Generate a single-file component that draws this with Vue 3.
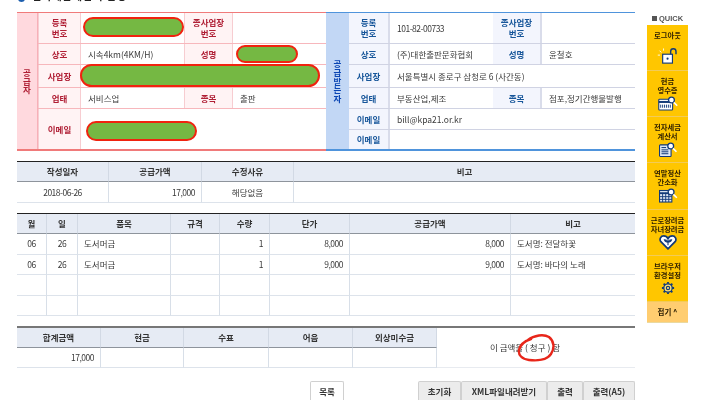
<script setup>
const red = [
  { h: 'h31', cells: [['th', '등록\n번호'], ['td', ''], ['th', '종사업장\n번호'], ['td', '']] },
  { h: 'h21', cells: [['th', '상호'], ['td', '시속4km(4KM/H)'], ['th', '성명'], ['td', '']] },
  { h: 'h23', cells: [['th', '사업장'], ['td wide', '']] },
  { h: 'h21', cells: [['th', '업태'], ['td', '서비스업'], ['th', '종목'], ['td', '출판']] },
  { h: 'h40', cells: [['th', '이메일'], ['td wide', '']] }
]
const blue = [
  { h: 'h31', cells: [['th', '등록\n번호'], ['td num', '101-82-00733'], ['th', '종사업장\n번호'], ['td', '']] },
  { h: 'h21', cells: [['th', '상호'], ['td', '(주)대한출판문화협회'], ['th', '성명'], ['td', '윤철호']] },
  { h: 'h23', cells: [['th', '사업장'], ['td wide', '서울특별시 종로구 삼청로 6 (사간동)']] },
  { h: 'h21', cells: [['th', '업태'], ['td', '부동산업,제조'], ['th', '종목'], ['td', '점포,정기간행물발행']] },
  { h: 'h21', cells: [['th', '이메일'], ['td wide', 'bill@kpa21.or.kr']] },
  { h: 'h19', cells: [['th', '이메일'], ['td wide', '']] }
]
const itemHead = ['월', '일', '품목', '규격', '수량', '단가', '공급가액', '비고']
const items = [
  ['06', '26', '도서머금', '', '1', '8,000', '8,000', '도서명: 전달하꽃'],
  ['06', '26', '도서머금', '', '1', '9,000', '9,000', '도서명: 바다의 노래'],
  ['', '', '', '', '', '', '', ''],
  ['', '', '', '', '', '', '', '']
]
const quick = [
  { label: ['로그아웃'], icon: 'lock' },
  { label: ['현금', '영수증'], icon: 'card' },
  { label: ['전자세금', '계산서'], icon: 'doc' },
  { label: ['연말정산', '간소화'], icon: 'grid' },
  { label: ['근로장려금', '자녀장려금'], icon: 'heart' },
  { label: ['브라우저', '환경설정'], icon: 'gear' }
]
</script>

<template>
  <div class="page">
    <main class="main">
      <div class="title"><i class="dot"></i><span>전자세금계산서 발행</span></div>

      <section class="party">
        <div class="side side--red">
          <b class="side__t"><span>공</span><span>급</span><span>자</span></b>
          <div class="rows">
            <div v-for="(r, i) in red" :key="i" class="row row--red" :class="r.h">
              <div v-for="(c, j) in r.cells" :key="j" :class="c[0]">{{ c[1] }}</div>
            </div>
          </div>
        </div>
        <div class="side side--blue">
          <b class="side__t"><span>공</span><span>급</span><span>받</span><span>는</span><span>자</span></b>
          <div class="rows">
            <div v-for="(r, i) in blue" :key="i" class="row row--blue" :class="r.h">
              <div v-for="(c, j) in r.cells" :key="j" :class="c[0]">{{ c[1] }}</div>
            </div>
          </div>
        </div>
        <i class="mask mask--1"></i>
        <i class="mask mask--2"></i>
        <i class="mask mask--3"></i>
        <i class="mask mask--4"></i>
      </section>

      <section class="tb tb--sum">
        <div class="hd">작성일자</div><div class="hd">공급가액</div><div class="hd">수정사유</div><div class="hd">비고</div>
        <div class="cell c num">2018-06-26</div><div class="cell r num">17,000</div><div class="cell c">해당없음</div><div class="cell"></div>
      </section>

      <section class="tb tb--items">
        <div v-for="h in itemHead" :key="h" class="hd">{{ h }}</div>
        <template v-for="(row, i) in items" :key="i">
          <div class="cell c num">{{ row[0] }}</div>
          <div class="cell c num">{{ row[1] }}</div>
          <div class="cell l">{{ row[2] }}</div>
          <div class="cell"></div>
          <div class="cell r num">{{ row[4] }}</div>
          <div class="cell r num">{{ row[5] }}</div>
          <div class="cell r num">{{ row[6] }}</div>
          <div class="cell l">{{ row[7] }}</div>
        </template>
      </section>

      <section class="total">
        <div class="tb tb--total">
          <div class="hd">합계금액</div><div class="hd">현금</div><div class="hd">수표</div><div class="hd">어음</div><div class="hd">외상미수금</div>
          <div class="cell r num">17,000</div><div class="cell"></div><div class="cell"></div><div class="cell"></div><div class="cell"></div>
        </div>
        <div class="claim">
          <span>이 금액을 ( 청구 ) 함</span>
          <svg class="scribble" width="40" height="28" viewBox="0 0 40 28">
            <path d="M11 6 C17 1 27 0 32 3 C37 7 38 14 34 20 C30 26 20 27 12 26 C5 25 1 21 2 16 C3 11 8 7 14 5" fill="none" stroke="#e8261a" stroke-width="2.4" stroke-linecap="round" />
          </svg>
        </div>
      </section>

      <section class="btns">
        <button class="btn btn--list">목록</button>
        <div class="btns__r">
          <button class="btn btn--a">초기화</button>
          <button class="btn btn--b">XML파일내려받기</button>
          <button class="btn btn--c">출력</button>
          <button class="btn btn--d">출력(A5)</button>
        </div>
      </section>
    </main>

    <aside class="quick">
      <div class="quick__t"><i class="burger"></i>QUICK</div>
      <div v-for="q in quick" :key="q.icon" class="qi">
        <div class="qi__l"><div v-for="l in q.label" :key="l">{{ l }}</div></div>
        <svg v-if="q.icon === 'lock'" class="ic" width="24" height="16" viewBox="0 0 24 18" fill="none" stroke="#123a78" stroke-width="1.3">
          <rect x="6" y="7" width="11" height="10" fill="#fff" />
          <path d="M15 7 V3.8 a3 3 0 0 1 6 0 V7" stroke-width="1.6" />
          <circle cx="11.5" cy="12" r="1.2" fill="#123a78" stroke="none" />
          <path d="M2.5 3 l2 2 M.5 8 h2.5 M7 .5 v2.5" stroke="#fff" stroke-width="1" />
        </svg>
        <svg v-else-if="q.icon === 'card'" class="ic" width="20" height="15" viewBox="0 0 26 19" fill="none" stroke="#123a78" stroke-width="1.4">
          <rect x="1" y="4" width="18" height="14" rx="1" fill="#fff" />
          <path d="M1 7.5 H19" stroke-width="2.6" />
          <path d="M3.5 11 v4 M6 11 v4 M8.5 11 v4 M11 11 v4 M13.5 11 v4 M16 11 v4" stroke-width="1.2" />
          <circle cx="17.5" cy="5" r="3.8" fill="#fff" stroke-width="1.7" />
          <path d="M20.5 8 L25 12.5" stroke="#fff" stroke-width="2" />
        </svg>
        <svg v-else-if="q.icon === 'doc'" class="ic" width="20" height="15" viewBox="0 0 26 19" fill="none" stroke="#123a78" stroke-width="1.4">
          <rect x="2" y="3.5" width="15" height="15" rx="1" fill="#dfe8f2" />
          <path d="M4.5 7 h6 M4.5 10 h9 M4.5 12.5 h9 M4.5 15 h9" stroke-width="1.3" />
          <circle cx="16.5" cy="5" r="3.8" fill="#fff" stroke-width="1.7" />
          <path d="M19.5 8 L24 12.5" stroke="#fff" stroke-width="2" />
        </svg>
        <svg v-else-if="q.icon === 'grid'" class="ic" width="20" height="15" viewBox="0 0 26 19" fill="none" stroke="#123a78" stroke-width="1.4">
          <rect x="2" y="3" width="16" height="15" fill="#dfe8f2" />
          <path d="M2 6.5 H18" stroke-width="2.4" />
          <path d="M6 6 V18 M10 6 V18 M14 6 V18 M2 11 H18 M2 14.5 H18" stroke-width="1.2" />
          <circle cx="17" cy="5" r="3.8" fill="#fff" stroke-width="1.7" />
          <path d="M20 8 L24.5 12.5" stroke="#fff" stroke-width="2" />
        </svg>
        <svg v-else-if="q.icon === 'heart'" class="ic" width="18" height="15" viewBox="0 0 22 19" fill="none">
          <path d="M11 17.5 L2 8.5 C-0.5 5 2 1.2 5.5 1.2 C8 1.2 10 2.6 11 4.5 C12 2.6 14 1.2 16.5 1.2 C20 1.2 22.5 5 20 8.5 Z" fill="#fff" stroke="#123a78" stroke-width="2.2" />
          <path d="M11 13 V9 M11 9 C8.5 9 7 7.5 6.5 6 C9 6 10.5 7 11 9 C11.5 7 13 6 15.5 6 C15 7.5 13.5 9 11 9" stroke="#123a78" stroke-width="1.4" />
        </svg>
        <svg v-else class="ic" width="14" height="14" viewBox="0 0 20 19" fill="none" stroke="#123a78">
          <circle cx="10" cy="9.5" r="6" fill="#ffe27a" stroke-width="1.8" />
          <circle cx="10" cy="9.5" r="2.4" stroke-width="1.6" />
          <path d="M10 .8 V3.5 M10 15.5 V18.2 M1.3 9.5 H4 M16 9.5 H18.7 M3.8 3.3 L5.8 5.3 M14.2 13.7 L16.2 15.7 M3.8 15.7 L5.8 13.7 M14.2 5.3 L16.2 3.3" stroke-width="2.6" />
        </svg>
      </div>
      <div class="qi__fold">접기 ^</div>
    </aside>
  </div>
</template>

<style>
html, body { margin: 0; background: #fff; }
</style>

<style scoped>
.page {
  width: 720px;
  height: 400px;
  overflow: hidden;
  display: flex;
  font-family: "Noto Sans CJK KR", "Noto Sans", sans-serif;
  font-size: 8.5px;
  color: #3a3a3a;
  filter: blur(0.35px);
}

.main {
  width: 618px;
  margin-left: 17px;
}

.title {
  height: 12px;
  display: flex;
  align-items: flex-end;
  gap: 7px;
  overflow: hidden;
  font-size: 10px;
  font-weight: 700;
  line-height: 12px;
  letter-spacing: 1px;
  color: #222;
}
.title span { margin-bottom: 10px; }
.dot {
  width: 7px;
  height: 7px;
  margin: 0 0 10px 1px;
  border-radius: 50%;
  background: #1d5fae;
}

.party {
  display: flex;
  position: relative;
}
.side {
  display: flex;
  width: 309px;
  height: 139px;
  box-sizing: border-box;
  border-top: 1px solid;
  border-bottom: 2px solid;
}
.side--red { border-color: #f07a7a; }
.side--blue { border-color: #4f94dc; }
.side__t {
  flex: none;
  box-sizing: border-box;
  width: 21px;
  display: flex;
  flex-direction: column;
  align-items: center;
  justify-content: center;
  line-height: 8.8px;
  font-size: 8.5px;
}
.side--red .side__t { background: #ffd9de; color: #b01f35; border-right: 1px solid #f7b0b8; }
.side--blue .side__t { width: 23px; background: #c2d7f5; color: #0b46b4; }
.rows { flex: 1; }
.row { display: flex; box-sizing: border-box; }
.h31 { height: 31px; }
.h21 { height: 21px; }
.h23 { height: 23px; }
.h40 { height: 40px; }
.h19 { height: 19px; }
.row--red { border-bottom: 1px solid #f7b7bc; }
.row--blue { border-bottom: 1px solid #d0d3e3; }
.rows .row:last-child { border-bottom: 0; }

.row > div { box-sizing: border-box; }
.th {
  display: flex;
  align-items: center;
  justify-content: center;
  text-align: center;
  white-space: pre-line;
  font-weight: 700;
  line-height: 11px;
}
.td {
  display: flex;
  align-items: center;
  padding-left: 7px;
  white-space: nowrap;
}
.num { letter-spacing: -.5px; }
.row--red .th { background: #fff3f4; color: #b01f35; border-right: 1px solid #f7cdd1; border-left: 1px solid #f7cdd1; }
.row--blue .th { background: #f3f5fd; color: #17569a; border-right: 2px solid #d9dcea; }
.row--red > :nth-child(1) { width: 43px; }
.row--red > :nth-child(2) { width: 103px; }
.row--red > :nth-child(3) { width: 49px; }
.row--red > :nth-child(4) { width: 93px; }
.row--blue > :nth-child(1) { width: 41px; }
.row--blue > :nth-child(2) { width: 103px; }
.row--blue > :nth-child(3) { width: 49px; }
.row--blue > :nth-child(4) { width: 93px; }
.row > .wide { width: auto; flex: 1; }

.mask {
  position: absolute;
  box-sizing: border-box;
  border: 2px solid #f0230f;
  border-radius: 12px;
  background: #75b843;
}
.mask--1 { left: 66px; top: 5px; width: 101px; height: 20px; }
.mask--2 { left: 219px; top: 33px; width: 62px; height: 18px; }
.mask--3 { left: 63px; top: 52px; width: 240px; height: 23px; }
.mask--4 { left: 69px; top: 109px; width: 111px; height: 20px; }

.tb {
  display: grid;
  border-top: 1px solid #222;
  margin-top: 10px;
  text-align: center;
}
.tb--sum { grid-template-columns: 92px 93px 92px 341px; }
.tb--items { grid-template-columns: 30px 31px 93px 49px 50px 80px 161px 124px; }
.tb--total { grid-template-columns: 84px 83px 85px 84px 84px; margin-top: 0; border-top: 0; }
.hd, .cell {
  box-sizing: border-box;
  border-right: 1px solid #d8dfe8;
  white-space: nowrap;
}
.hd {
  height: 20px;
  line-height: 19px;
  background: #e6ebf4;
  border-bottom: 1px solid #8e949c;
  border-right-color: #d2d9e4;
  font-weight: 700;
  color: #333;
}
.cell {
  height: 20.6px;
  line-height: 19.6px;
  border-bottom: 1px solid #dde3eb;
}
.tb--sum .cell { height: 21px; line-height: 20px; }
.tb--total .cell { height: 20px; line-height: 19px; }
.c { text-align: center; }
.r { text-align: right; padding-right: 6px; }
.l { text-align: left; padding-left: 6px; }
.tb--sum > :nth-child(4n), .tb--items > :nth-child(8n) { border-right: 0; }

.total {
  display: flex;
  margin-top: 9.6px;
  border-top: 2px solid #777;
}
.claim {
  flex: 1;
  display: flex;
  align-items: center;
  justify-content: center;
  padding-right: 22px;
  position: relative;
  border-bottom: 1px solid #e8ebf0;
}
.claim span { color: #333; }
.scribble {
  position: absolute;
  left: 80px;
  top: 6px;
}

.btns {
  display: flex;
  justify-content: space-between;
  margin-top: 13px;
}
.btns__r { display: flex; }
.btn {
  box-sizing: border-box;
  height: 20px;
  padding: 0;
  border: 1px solid #d0d0d0;
  border-bottom: 0;
  border-radius: 2px 2px 0 0;
  font: 700 8.5px "Noto Sans CJK KR", "Noto Sans", sans-serif;
  color: #333;
  background: #ececec;
}
.btn--list { width: 34px; margin-left: 293px; background: #fff; }
.btn--a { width: 43px; }
.btn--b { width: 86px; }
.btn--c { width: 36px; }
.btn--d { width: 52px; }

.quick {
  width: 41px;
  margin-left: 12px;
  flex: none;
}
.quick__t {
  height: 25px;
  display: flex;
  align-items: center;
  justify-content: center;
  gap: 2px;
  padding-top: 12px;
  box-sizing: border-box;
  font: 700 7.5px "Liberation Sans", sans-serif;
  color: #555;
}
.burger {
  width: 5px;
  height: 5px;
  background: #555;
}
.qi {
  box-sizing: border-box;
  height: 46.17px;
  background: #ffc600;
  border-bottom: 1px solid #f2cb58;
  text-align: center;
  padding-top: 6px;
  overflow: hidden;
}
.qi__l {
  min-height: 18px;
  font-size: 7.3px;
  font-weight: 700;
  line-height: 9px;
  color: #2a1c00;
  white-space: nowrap;
}
.ic { display: block; margin: 1px auto 0; }
.qi:nth-child(2) .qi__l { min-height: 16px; }
.qi__fold {
  height: 20px;
  line-height: 19px;
  text-align: center;
  background: #ffcd70;
  border-bottom: 1px solid #ead9a0;
  font-size: 7.5px;
  font-weight: 700;
  color: #2a1c00;
}
</style>
